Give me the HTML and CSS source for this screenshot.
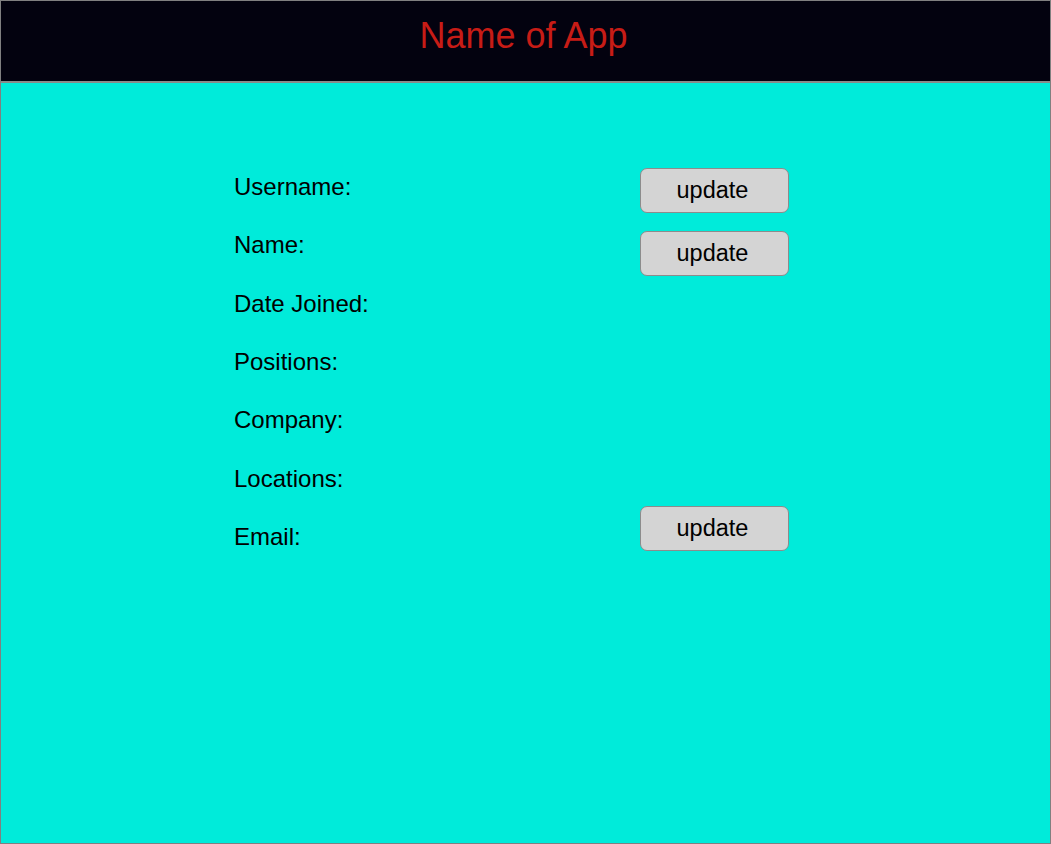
FILE: index.html
```html
<!DOCTYPE html>
<html lang="en">
<head>
<meta charset="utf-8">
<title>Name of App</title>
<link rel="stylesheet" href="styles.css">
</head>
<body>
<div class="frame">
  <header class="app-header">
    <h1 class="app-title">Name of App</h1>
  </header>
  <main class="content">
    <div class="labels">
      <div class="label">Username:</div>
      <div class="label">Name:</div>
      <div class="label">Date Joined:</div>
      <div class="label">Positions:</div>
      <div class="label">Company:</div>
      <div class="label">Locations:</div>
      <div class="label">Email:</div>
    </div>
    <div class="actions">
      <button class="update-btn">update</button>
      <button class="update-btn second">update</button>
      <button class="update-btn third">update</button>
    </div>
  </main>
</div>
</body>
</html>
```

FILE: styles.css
```css
html, body {
  margin: 0;
  padding: 0;
}

body {
  font-family: "Liberation Sans", Arial, Helvetica, sans-serif;
  width: 1051px;
  height: 844px;
  overflow: hidden;
}

.frame {
  box-sizing: border-box;
  width: 1051px;
  height: 844px;
  border: 1px solid #808080;
  display: flex;
  flex-direction: column;
  background: #00ebda;
}

.app-header {
  height: 80px;
  background: #03020f;
  border-bottom: 2px solid #8a8a8a;
  box-sizing: content-box;
  flex: none;
}

.app-title {
  margin: 0;
  padding-top: 17px;
  padding-right: 4px;
  font-size: 36px;
  line-height: 36px;
  font-weight: normal;
  color: #c71c16;
  text-align: center;
}

.content {
  flex: 1;
  display: flex;
  padding: 75px 0 0 233px;
  background: #00ebda;
}

.labels {
  width: 406px;
  display: flex;
  flex-direction: column;
}

.label {
  font-size: 24px;
  line-height: 58.33px;
  color: #000;
}

.actions {
  display: flex;
  flex-direction: column;
  padding-top: 10px;
}

.update-btn {
  box-sizing: border-box;
  width: 149px;
  height: 45px;
  padding: 0 4px 0 0;
  border: 1px solid #8c8c8c;
  border-radius: 7px;
  background: #d4d4d4;
  color: #000;
  font-family: "Liberation Sans", Arial, Helvetica, sans-serif;
  font-size: 23.5px;
  line-height: 27px;
}

.update-btn.second {
  margin-top: 18px;
}

.update-btn.third {
  margin-top: 230px;
}
```
